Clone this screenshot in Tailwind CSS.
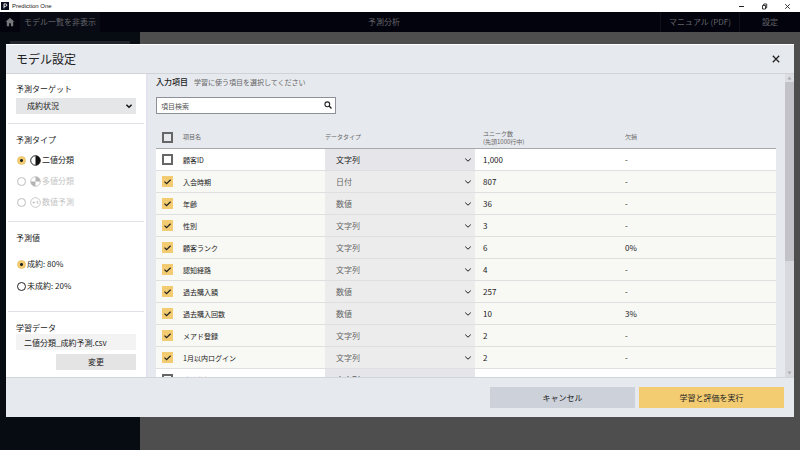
<!DOCTYPE html>
<html lang="ja">
<head>
<meta charset="utf-8">
<title>Prediction One</title>
<script src="https://cdn.jsdelivr.net/npm/@tailwindcss/browser@4"></script>
</head>
<body class="h-screen overflow-hidden flex flex-col bg-[#4e4e4f] text-[8px] leading-[12px] text-[#222] font-['Noto_Sans_CJK_JP',sans-serif]">

<!-- Window title bar -->
<header class="h-3 shrink-0 flex items-center justify-between bg-white pl-px">
  <div class="flex items-center gap-[3px]">
    <svg class="size-2" viewBox="0 0 8 8" aria-hidden="true"><rect width="8" height="8" fill="#0a0d1c"/><path d="M3 6.300V1.900H4.600a1.200 1.200 0 0 1 0 2.400H3" fill="none" stroke="#fff" stroke-width=".9"/></svg>
    <span class="text-[6px] leading-[10px] font-['Liberation_Sans',sans-serif]">Prediction One</span>
  </div>
  <div class="flex items-center gap-4 pr-[9px]">
    <button aria-label="最小化" class="size-[7px]"><svg class="size-[7px]" viewBox="0 0 7 7"><path d="M1 3.500h5" stroke="#222" stroke-width="1"/></svg></button>
    <button aria-label="元に戻す" class="size-[7px]"><svg class="size-[7px]" viewBox="0 0 7 7" fill="none" stroke="#222" stroke-width=".9"><path d="M1.500 2.500h3v3.500h-3zM2.700 2.300V1h3v3.800H4.700"/></svg></button>
    <button aria-label="閉じる" class="size-[7px]"><svg class="size-[7px]" viewBox="0 0 7 7"><path d="M1.200 1.200l4.600 4.600M5.800 1.200L1.200 5.800" stroke="#222" stroke-width=".9"/></svg></button>
  </div>
</header>

<!-- Application bar -->
<nav class="h-5 shrink-0 grid grid-cols-[1fr_auto_1fr] items-center bg-[#02030d] text-[#66666b]">
  <div class="flex h-full items-center gap-[5px] pl-[5px]">
    <a href="#" aria-label="ホーム"><svg class="size-[10px]" viewBox="0 0 10 10" fill="#77777b"><path d="M5 .8L.6 4.800h1.200V9.200h2.300V6.300h1.800v2.900h2.300V4.800h1.200z"/></svg></a>
    <button class="h-full bg-[#080b13] px-1">モデル一覧を非表示</button>
  </div>
  <h1 class="pr-8">予測分析</h1>
  <div class="flex h-full items-center justify-end">
    <a href="#" class="flex h-full items-center border-x border-[#10121a] px-2">マニュアル (PDF)</a>
    <a href="#" class="px-[22px]">設定</a>
  </div>
</nav>

<!-- Dimmed page behind the dialog -->
<div class="flex-1 flex">
  <aside class="w-[140px] bg-[#070b12] px-[10px] pt-[9px]"><div class="h-4 bg-[#22262c]"></div></aside>
</div>

<!-- Settings dialog -->
<section role="dialog" aria-labelledby="dlg-title" class="fixed top-11 bottom-[33px] inset-x-[6px] flex flex-col bg-[#e6e9ee]">
  <header class="h-[30px] shrink-0 flex items-center justify-between border-t border-white border-b border-b-[#d0d3d8] pl-[10px] pr-[13px]">
    <h2 id="dlg-title" class="text-[12px] leading-[18px]">モデル設定</h2>
    <button aria-label="閉じる" class="size-[10px]"><svg class="size-[10px]" viewBox="0 0 10 10"><path d="M1.800 1.800l6.400 6.400M8.200 1.800L1.800 8.200" stroke="#222" stroke-width="1.300"/></svg></button>
  </header>

  <div class="flex-1 min-h-0 flex">
    <form class="w-[140px] shrink-0 flex flex-col bg-white px-[2px]">
      <div class="h-[50px] border-b border-[#dfe1e6] px-2 pt-[9px]">
        <label for="target" class="block">予測ターゲット</label>
        <div class="relative mt-[3px]">
          <select id="target" class="block appearance-none w-full h-4 bg-[#e5e6e8] pl-[11px]"><option>成約状況</option></select>
          <svg class="pointer-events-none absolute right-[3px] top-1 size-2" viewBox="0 0 8 8" fill="none" stroke="#111" stroke-width="1.500"><path d="M1.400 2.700L4 5.200l2.600-2.500"/></svg>
        </div>
      </div>

      <fieldset class="h-[98px] border-b border-[#dfe1e6] px-2 pt-[10px]">
        <legend class="float-left w-full">予測タイプ</legend>
        <div class="clear-both flex flex-col gap-[5px] pt-[6px]">
          <label class="h-4 flex items-center">
            <input type="radio" name="type" checked class="appearance-none size-[9px] ml-px rounded-full border border-[#e8c46c] bg-[radial-gradient(circle,#222_0_1px,#f3cc70_2px)]">
            <svg class="size-[11px] ml-1 mr-px" viewBox="0 0 11 11"><circle cx="5.500" cy="5.500" r="4.800" fill="#fff" stroke="#111" stroke-width=".9"/><path d="M5.500.7a4.800 4.800 0 0 1 0 9.600z" fill="#111"/></svg>
            二値分類</label>
          <label class="h-4 flex items-center text-[#c4c4c4]">
            <input type="radio" name="type" disabled class="appearance-none size-[9px] ml-px rounded-full border border-[#bbb] bg-white">
            <svg class="size-[11px] ml-1 mr-px" viewBox="0 0 11 11"><circle cx="5.500" cy="5.500" r="4.800" fill="#fff" stroke="#bbb" stroke-width=".8"/><path d="M5.500 5.500V.7a4.800 4.800 0 0 1 4.800 4.800zM5.500 5.500v4.800A4.800 4.800 0 0 1 .7 5.500z" fill="#b4b4b4"/></svg>
            多値分類</label>
          <label class="h-4 flex items-center text-[#c4c4c4]">
            <input type="radio" name="type" disabled class="appearance-none size-[9px] ml-px rounded-full border border-[#bbb] bg-white">
            <svg class="size-[11px] ml-1 mr-px" viewBox="0 0 11 11" fill="none" stroke="#bbb" stroke-width=".8"><circle cx="5.500" cy="5.500" r="4.800"/><path d="M2.500 5.500h2.400M3.700 4.300v2.400M6.200 5h1M7.700 4v3"/></svg>
            数値予測</label>
        </div>
      </fieldset>

      <fieldset class="h-[90px] border-b border-[#dfe1e6] px-2 pt-[10px]">
        <legend class="float-left w-full">予測値</legend>
        <div class="clear-both flex flex-col gap-[6px] pt-[12px]">
          <label class="h-4 flex items-center gap-px">
            <input type="radio" name="value" checked class="appearance-none size-[9px] ml-px rounded-full border border-[#e8c46c] bg-[radial-gradient(circle,#222_0_1px,#f3cc70_2px)]">成約: 80%</label>
          <label class="h-4 flex items-center gap-px">
            <input type="radio" name="value" class="appearance-none size-[9px] ml-px rounded-full border border-[#222] bg-white">未成約: 20%</label>
        </div>
      </fieldset>

      <div class="flex-1 px-2 pt-[10px]">
        <h3>学習データ</h3>
        <p class="h-4 bg-[#f3f3f4] pl-2 leading-[18px]">二値分類_成約予測.csv</p>
        <button type="button" class="mt-1 ml-auto block h-4 w-20 bg-[#e4e4e5]">変更</button>
      </div>
    </form>

    <main class="relative flex-1 min-w-0 overflow-hidden border-l-2 border-[#e3e3f0] pl-2 pr-[18px] pt-[2px]">
      <div class="flex items-center gap-[6px]">
        <h3 class="font-medium">入力項目</h3>
        <p class="text-[7px] text-[#666]">学習に使う項目を選択してください</p>
      </div>
      <div class="relative mt-[9px] h-[17px] w-[180px]">
        <input type="search" aria-label="項目検索" placeholder="項目検索" class="block size-full border border-[#8d9096] bg-white px-1 text-[7px] placeholder:text-[#555]">
        <svg class="absolute right-1 top-1 size-2" viewBox="0 0 8 8" fill="none" stroke="#222" stroke-width="1.100"><circle cx="3.300" cy="3.300" r="2.400"/><path d="M5.100 5.100l2.400 2.400" stroke-width="1.400"/></svg>
      </div>
      <table class="mt-3 w-full table-fixed border-separate border-spacing-0 text-left">
        <colgroup><col class="w-[27px]"><col class="w-[142px]"><col class="w-[150px]"><col class="w-[142px]"><col></colgroup>
        <thead>
          <tr class="h-[23px] text-[6px] leading-[8px] text-[#666]">
            <th class="border-b border-[#a5a8ad] pl-[6px]"><input type="checkbox" aria-label="すべて選択" class="block appearance-none size-[11px] border-2 border-[#666]"></th>
            <th class="border-b border-[#a5a8ad] font-normal">項目名</th>
            <th class="border-b border-[#a5a8ad] font-normal">データタイプ</th>
            <th class="border-b border-[#a5a8ad] pl-2 pt-[2px] font-normal">ユニーク数<br>(先頭1000行中)</th>
            <th class="border-b border-[#a5a8ad] pl-2 font-normal">欠損</th>
          </tr>
        </thead>
        <tbody id="items"></tbody>
      </table>

      <div class="absolute right-0 inset-y-0 w-[9px] flex flex-col items-center bg-[#d8d9df]" aria-hidden="true">
        <svg class="h-2 w-[9px] bg-[#dcdde2]" viewBox="0 0 9 8"><path d="M2.500 5.500L4.500 2.500l2 3z" fill="#aaabb2"/></svg>
        <div class="h-[179px] w-full bg-[#c2c2c8]"></div>
        <svg class="mt-auto h-2 w-[9px]" viewBox="0 0 9 8"><path d="M2.500 2.500L4.500 5.500l2-3z" fill="#aaabb2"/></svg>
      </div>
    </main>
  </div>

  <footer class="h-10 shrink-0 flex justify-end gap-1 border-t border-[#d3d5dc] pt-[9px] pr-[10px]">
    <button class="h-[21px] w-[145px] bg-[#cdd1d9]">キャンセル</button>
    <button class="h-[21px] w-[145px] bg-[#f3cc72]">学習と評価を実行</button>
  </footer>
</section>

<script>
const items = [
  ['顧客ID', '文字列', '1,000', '-', false],
  ['入会時期', '日付', '807', '-', true],
  ['年齢', '数値', '36', '-', true],
  ['性別', '文字列', '3', '-', true],
  ['顧客ランク', '文字列', '6', '0%', true],
  ['認知経路', '文字列', '4', '-', true],
  ['過去購入額', '数値', '257', '-', true],
  ['過去購入回数', '数値', '10', '3%', true],
  ['メアド登録', '文字列', '2', '-', true],
  ['1月以内ログイン', '文字列', '2', '-', true],
  ['成約状況', '文字列', '', '', false]
];
document.getElementById('items').innerHTML = items.map(([name, type, unique, missing, on], i) => `
  <tr class="h-[22px] ${on ? 'bg-[#f8f8f4]' : 'bg-white'}">
    <td class="border-b border-[#dedfe0] pl-[6px]">
      <div class="relative size-[11px]">
        <input id="item${i}" type="checkbox" ${on ? 'checked' : ''} class="peer block appearance-none size-full border-2 border-[#666] bg-white checked:border-[#f3cc72] checked:bg-[#f3cc72]">
        <svg class="pointer-events-none absolute inset-0 hidden size-full peer-checked:block" viewBox="0 0 11 11" fill="none" stroke="#222" stroke-width="1.300"><path d="M2.500 5.600l2.100 2L8.600 3.700"/></svg>
      </div>
    </td>
    <td class="border-b border-[#dedfe0] text-[7px]"><label for="item${i}">${name}</label></td>
    <td class="border-b border-[#dedfe0] ${on ? 'bg-[#ececec] text-[#666]' : 'bg-[#e6e6ea]'}">
      <div class="relative">
        <select aria-label="${name}のデータタイプ" class="block appearance-none w-full h-[21px] pl-[11px]"><option>${type}</option></select>
        <svg class="pointer-events-none absolute right-[3px] top-[7px] size-2" viewBox="0 0 8 8" fill="none" stroke="#222" stroke-width="1"><path d="M1.200 2.600L4 5.200l2.800-2.600"/></svg>
      </div>
    </td>
    <td class="border-b border-[#dedfe0] pl-2">${unique}</td>
    <td class="border-b border-[#dedfe0] pl-2">${missing}</td>
  </tr>`).join('');
</script>
</body>
</html>
